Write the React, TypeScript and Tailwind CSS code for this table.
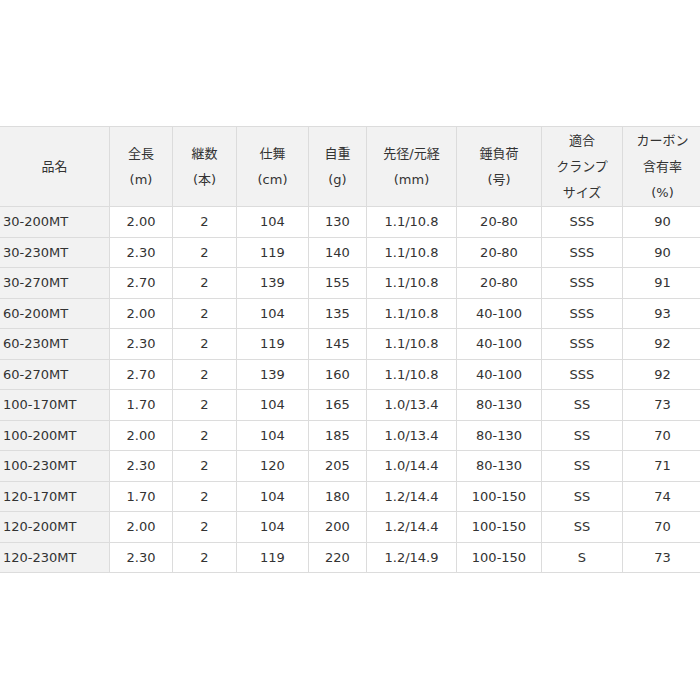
const header: string[][] = [
  ["品名"],
  ["全長", "(m)"],
  ["継数", "(本)"],
  ["仕舞", "(cm)"],
  ["自重", "(g)"],
  ["先径/元経", "(mm)"],
  ["錘負荷", "(号)"],
  ["適合", "クランプ", "サイズ"],
  ["カーボン", "含有率", "(%)"],
];

const rows: string[][] = [
  ["30-200MT", "2.00", "2", "104", "130", "1.1/10.8", "20-80", "SSS", "90"],
  ["30-230MT", "2.30", "2", "119", "140", "1.1/10.8", "20-80", "SSS", "90"],
  ["30-270MT", "2.70", "2", "139", "155", "1.1/10.8", "20-80", "SSS", "91"],
  ["60-200MT", "2.00", "2", "104", "135", "1.1/10.8", "40-100", "SSS", "93"],
  ["60-230MT", "2.30", "2", "119", "145", "1.1/10.8", "40-100", "SSS", "92"],
  ["60-270MT", "2.70", "2", "139", "160", "1.1/10.8", "40-100", "SSS", "92"],
  ["100-170MT", "1.70", "2", "104", "165", "1.0/13.4", "80-130", "SS", "73"],
  ["100-200MT", "2.00", "2", "104", "185", "1.0/13.4", "80-130", "SS", "70"],
  ["100-230MT", "2.30", "2", "120", "205", "1.0/14.4", "80-130", "SS", "71"],
  ["120-170MT", "1.70", "2", "104", "180", "1.2/14.4", "100-150", "SS", "74"],
  ["120-200MT", "2.00", "2", "104", "200", "1.2/14.4", "100-150", "SS", "70"],
  ["120-230MT", "2.30", "2", "119", "220", "1.2/14.9", "100-150", "S", "73"],
];

// column widths measured off the grid lines
const widths = [110, 63, 64, 72, 58, 90, 85, 81, 80];

export default function App() {
  return (
    <div
      className="w-[700px] h-[700px] overflow-hidden bg-white pt-[126px] text-[13px] text-[#333]"
      style={{ fontFamily: '"DejaVu Sans", "Noto Sans CJK JP", sans-serif' }}
    >
      <table className="-ml-px table-fixed border-collapse w-[703px]">
        <colgroup>
          {widths.map((w, i) => (
            <col key={i} style={{ width: w }} />
          ))}
        </colgroup>
        <thead>
          <tr className="h-[80px]">
            {header.map((lines, i) => (
              <th
                key={i}
                className="border border-[#dcdcdc] bg-[#f2f2f2] p-0 text-center font-normal leading-[26px]"
              >
                {lines.map((l) => (
                  <div key={l}>{l}</div>
                ))}
              </th>
            ))}
          </tr>
        </thead>
        <tbody>
          {rows.map((r) => (
            <tr key={r[0]} className="h-[30.5px]">
              {r.map((c, i) => (
                <td
                  key={i}
                  className={
                    i === 0
                      ? "border border-[#dcdcdc] bg-[#f2f2f2] py-0 pl-[3px] text-left"
                      : "border border-[#dcdcdc] p-0 text-center"
                  }
                >
                  {c}
                </td>
              ))}
            </tr>
          ))}
        </tbody>
      </table>
    </div>
  );
}
